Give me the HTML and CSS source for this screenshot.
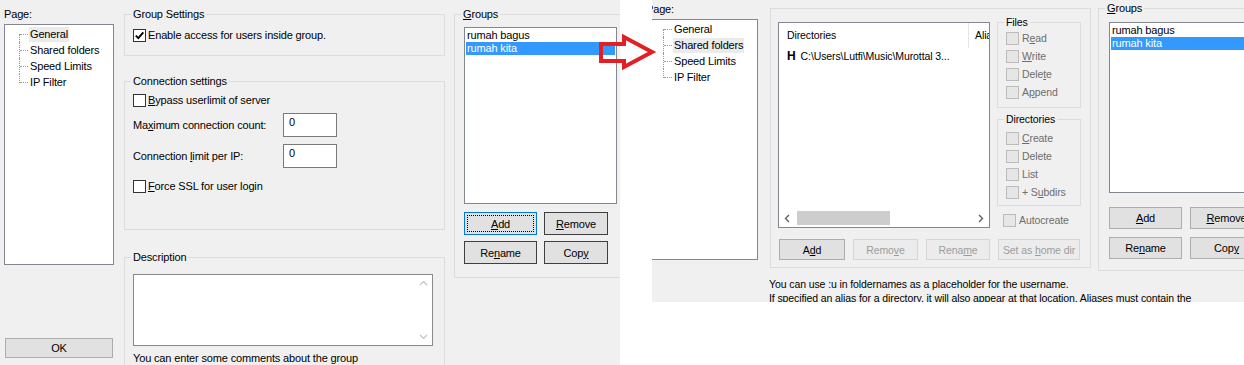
FILE: index.html
```html
<!DOCTYPE html>
<html lang="en">
<head>
  <meta charset="UTF-8">
  <title>Group settings</title>
  <link rel="stylesheet" href="styles.css">
</head>
<body>
  <div class="shot">

    <!-- left: General page -->
    <section class="dlg dlg-left">
      <div class="pages">
        <div class="lbl">Page:</div>
        <ul class="tree">
          <li class="sel"><span>General</span></li>
          <li><span>Shared folders</span></li>
          <li><span>Speed Limits</span></li>
          <li><span>IP Filter</span></li>
        </ul>
        <button class="btn btn-ok">OK</button>
      </div>

      <div class="main">
        <div class="group g-settings">
          <div class="gtitle">Group Settings</div>
          <div class="chk">
            <span class="cb"><svg viewBox="0 0 11 11"><path d="M1.8 5.6 L4.3 8.2 L9.3 2.3" /></svg></span>
            Enable access for users inside group.
          </div>
        </div>

        <div class="group g-conn">
          <div class="gtitle">Connection settings</div>
          <div class="chk r-bypass"><span class="cb"></span><u>B</u>ypass userlimit of server</div>
          <div class="field r-max">
            <span class="flabel">Ma<u>x</u>imum connection count:</span>
            <input class="num" value="0">
          </div>
          <div class="field r-limit">
            <span class="flabel">Connection <u>l</u>imit per IP:</span>
            <input class="num" value="0">
          </div>
          <div class="chk r-ssl"><span class="cb"></span><u>F</u>orce SSL for user login</div>
        </div>

        <div class="group g-desc">
          <div class="gtitle">Description</div>
          <div class="memo">
            <div class="memo-text"></div>
            <div class="memo-bar">
              <svg viewBox="0 0 17 17"><path d="M5 10 L8.5 6.5 L12 10" /></svg>
              <svg viewBox="0 0 17 17"><path d="M5 7 L8.5 10.5 L12 7" /></svg>
            </div>
          </div>
          <div class="note">You can enter some comments about the group</div>
        </div>
      </div>

      <div class="groups">
        <div class="group g-groups">
          <div class="gtitle"><u>G</u>roups</div>
          <ul class="list">
            <li>rumah bagus</li>
            <li class="sel">rumah kita</li>
          </ul>
          <div class="gbtns">
            <button class="btn focus"><u>A</u>dd</button>
            <button class="btn dark"><u>R</u>emove</button>
            <button class="btn dark">Re<u>n</u>ame</button>
            <button class="btn dark">Cop<u>y</u></button>
          </div>
        </div>
      </div>
    </section>

    <!-- right: Shared folders page -->
    <section class="dlg dlg-right">
      <div class="pages">
        <div class="lbl">Page:</div>
        <ul class="tree">
          <li><span>General</span></li>
          <li class="sel"><span>Shared folders</span></li>
          <li><span>Speed Limits</span></li>
          <li><span>IP Filter</span></li>
        </ul>
      </div>

      <div class="share">
        <div class="group g-share">
          <div class="share-top">
            <div class="listview">
              <div class="lv-head">
                <div class="c1">Directories</div>
                <div class="c2">Aliases</div>
              </div>
              <div class="lv-rows">
                <div class="lv-row"><b>H</b>C:\Users\Lutfi\Music\Murottal 3...</div>
              </div>
              <div class="hscroll">
                <svg viewBox="0 0 17 17"><path d="M10 5 L6.5 8.5 L10 12" /></svg>
                <div class="thumb"></div>
                <svg class="right" viewBox="0 0 17 17"><path d="M7 5 L10.5 8.5 L7 12" /></svg>
              </div>
            </div>

            <div class="perm">
              <div class="group g-files">
                <div class="gtitle">Files</div>
                <div class="pchk"><span class="cb"></span>R<u>e</u>ad</div>
                <div class="pchk"><span class="cb"></span><u>W</u>rite</div>
                <div class="pchk"><span class="cb"></span>Dele<u>t</u>e</div>
                <div class="pchk"><span class="cb"></span>A<u>p</u>pend</div>
              </div>
              <div class="group g-dirs">
                <div class="gtitle">Directories</div>
                <div class="pchk"><span class="cb"></span><u>C</u>reate</div>
                <div class="pchk"><span class="cb"></span>Delete</div>
                <div class="pchk"><span class="cb"></span>List</div>
                <div class="pchk"><span class="cb"></span>+ S<u>u</u>bdirs</div>
              </div>
              <div class="pchk autocreate"><span class="cb"></span>Autocreate</div>
            </div>
          </div>

          <div class="share-btns">
            <button class="btn b-add">A<u>d</u>d</button>
            <button class="btn off b-remove">Remo<u>v</u>e</button>
            <button class="btn off b-rename">Rena<u>m</u>e</button>
            <button class="btn off b-home">Set as <u>h</u>ome dir</button>
          </div>
        </div>
        <div class="hint">
          <div>You can use :u in foldernames as a placeholder for the username.</div>
          <div>If specified an alias for a directory, it will also appear at that location. Aliases must contain the</div>
        </div>
      </div>

      <div class="groups">
        <div class="group g-groups">
          <div class="gtitle"><u>G</u>roups</div>
          <ul class="list">
            <li>rumah bagus</li>
            <li class="sel">rumah kita</li>
          </ul>
          <div class="gbtns">
            <button class="btn"><u>A</u>dd</button>
            <button class="btn"><u>R</u>emove</button>
            <button class="btn">Re<u>n</u>ame</button>
            <button class="btn">Cop<u>y</u></button>
          </div>
        </div>
      </div>
    </section>

    <svg class="arrow" viewBox="0 0 62 40">
      <polygon points="5,12 28,12 28,5 56,20 28,35 28,29 5,29" />
    </svg>
  </div>
</body>
</html>
```

FILE: styles.css
```css
* {
  box-sizing: border-box;
}

body {
  margin: 0;
  background: #fff;
  font-family: "Liberation Sans", Arial, sans-serif;
  font-size: 11px;
  color: #000;
}

.shot {
  position: relative;
  display: flex;
  width: 1244px;
  height: 365px;
  overflow: hidden;
}

.dlg {
  display: flex;
  flex-shrink: 0;
  background: #f0f0f0;
  overflow: hidden;
  letter-spacing: -0.15px;
}

.dlg-left {
  width: 620px;
  height: 365px;
  padding-left: 4px;
}

.dlg-right {
  width: 592px;
  height: 302px;
  margin-left: 32px;
}

/* page tree */
.pages {
  width: 110px;
  flex-shrink: 0;
  display: flex;
  flex-direction: column;
}

.dlg-left .pages {
  padding: 7px 0 7px;
}

.dlg-right .pages {
  margin-left: -4px;
  padding-top: 2px;
}

.lbl {
  height: 14px;
  line-height: 14px;
}

.dlg-right .lbl {
  margin-left: -2px;
}

.tree {
  list-style: none;
  margin: 3px 0 0;
  padding: 1px 0 0 14px;
  height: 241px;
  background: #fff;
  border: 1px solid #828790;
}

.tree li {
  position: relative;
  height: 16px;
  line-height: 16px;
  padding-left: 10px;
  white-space: nowrap;
}

.tree li::before {
  content: "";
  position: absolute;
  left: 0;
  top: 0;
  bottom: 0;
  border-left: 1px dotted #9a9a9a;
}

.tree li:first-child::before {
  top: 8px;
}

.tree li:last-child::before {
  bottom: 7px;
}

.tree li::after {
  content: "";
  position: absolute;
  left: 1px;
  top: 8px;
  width: 8px;
  border-top: 1px dotted #9a9a9a;
}

.tree span {
  padding: 1px 1px 2px;
}

.tree .sel span {
  background: #ebebeb;
}

/* buttons */
.btn {
  font: inherit;
  letter-spacing: inherit;
  color: #000;
  height: 23px;
  padding: 0;
  background: #e1e1e1;
  border: 1px solid #adadad;
  border-radius: 0;
}

.btn.dark {
  border-color: #3f3f3f;
}

.btn.focus {
  border-color: #0078d7;
  outline: 1px dotted #000;
  outline-offset: -4px;
}

.btn.off {
  background: #ececec;
  border-color: #d6d6d6;
  color: #9c9c9c;
}

.btn-ok {
  margin: auto 0 0 1px;
  width: 108px;
  height: 20px;
}

/* group boxes */
.group {
  flex-shrink: 0;
  border: 1px solid #dcdcdc;
  padding: 0 8px;
}

.gtitle {
  width: max-content;
  height: 14px;
  line-height: 14px;
  margin: -8px 0 0 -2px;
  padding: 0 2px;
  background: #f0f0f0;
  white-space: nowrap;
}

.main {
  width: 321px;
  margin-left: 10px;
  flex-shrink: 0;
  display: flex;
  flex-direction: column;
}

.g-settings {
  margin-top: 14px;
  height: 42px;
}

.g-settings .chk {
  margin-top: 6px;
}

.g-conn {
  margin-top: 25px;
  height: 149px;
}

.g-desc {
  margin-top: 27px;
  height: 120px;
}

.chk {
  display: flex;
  align-items: center;
  height: 16px;
  white-space: nowrap;
}

.cb {
  display: flex;
  width: 13px;
  height: 13px;
  margin-right: 2px;
  flex-shrink: 0;
  background: #fff;
  border: 1px solid #333;
}

.cb svg {
  width: 11px;
  height: 11px;
  fill: none;
  stroke: #000;
  stroke-width: 1.9;
}

.r-bypass {
  margin-top: 4px;
}

.field {
  display: flex;
  align-items: center;
  height: 24px;
}

.r-max {
  margin-top: 5px;
}

.r-limit {
  margin-top: 7px;
}

.r-ssl {
  margin-top: 10px;
}

.flabel {
  width: 150px;
}

.num {
  width: 54px;
  height: 24px;
  padding: 0 5px 6px;
  font: inherit;
  color: #000;
  background: #fff;
  border: 1px solid #7a7a7a;
  outline: none;
}

.memo {
  display: flex;
  width: 300px;
  height: 72px;
  margin-top: 10px;
  background: #fff;
  border: 1px solid #8a8a8a;
}

.memo-text {
  flex: 1;
}

.memo-bar {
  width: 17px;
  display: flex;
  flex-direction: column;
  justify-content: space-between;
}

.memo-bar svg {
  width: 17px;
  height: 17px;
  fill: none;
  stroke: #c2c2c2;
  stroke-width: 1.2;
}

.note {
  margin-top: 5px;
  line-height: 14px;
  white-space: nowrap;
}

/* group list */
.groups {
  flex-shrink: 0;
}

.dlg-left .groups {
  margin-left: 9px;
}

.dlg-left .g-groups {
  margin-top: 14px;
  width: 175px;
  height: 264px;
}

.list {
  list-style: none;
  margin: 6px 0 0 1px;
  padding: 1px 1px 0;
  width: 153px;
  height: 177px;
  background: #fff;
  border: 1px solid #828790;
}

.list li {
  height: 13px;
  line-height: 13px;
  padding-left: 1px;
  white-space: nowrap;
}

.list .sel {
  background: #3399ff;
  color: #fff;
}

.gbtns {
  display: grid;
  grid-template-columns: 73px 64px;
  column-gap: 7px;
  row-gap: 6px;
  margin: 8px 0 0 1px;
}

.dlg-right .groups {
  margin-left: 7px;
}

.dlg-right .g-groups {
  margin-top: 8px;
  width: 170px;
  height: 263px;
}

.dlg-right .list {
  margin: 7px 0 0 2px;
  height: 171px;
  width: 160px;
}

.dlg-right .gbtns {
  grid-template-columns: 73px 73px;
  column-gap: 8px;
  row-gap: 8px;
  margin: 14px 0 0 2px;
}

.dlg-right .gbtns .btn {
  height: 22px;
}

/* shared folders page */
.share {
  width: 321px;
  margin-left: 12px;
  flex-shrink: 0;
  font-size: 10.5px;
  letter-spacing: -0.1px;
}

.g-share {
  margin-top: 8px;
  height: 260px;
  padding: 13px 7px 0;
}

.share-top {
  display: flex;
  gap: 7px;
}

.listview {
  display: flex;
  flex-direction: column;
  width: 212px;
  height: 206px;
  background: #fff;
  border: 1px solid #828790;
}

.lv-head {
  display: flex;
  height: 25px;
  line-height: 24px;
  white-space: nowrap;
}

.lv-head .c1 {
  width: 190px;
  padding-left: 8px;
  border-right: 1px solid #e5e5e5;
}

.lv-head .c2 {
  flex: 1;
  padding-left: 6px;
  overflow: hidden;
}

.lv-rows {
  flex: 1;
}

.lv-row {
  height: 17px;
  line-height: 17px;
  padding-left: 8px;
  white-space: nowrap;
}

.lv-row b {
  font-size: 12px;
  margin-right: 5px;
}

.hscroll {
  display: flex;
  align-items: center;
  height: 18px;
}

.hscroll svg {
  width: 17px;
  height: 17px;
  fill: none;
  stroke: #606060;
  stroke-width: 1.4;
}

.hscroll .right {
  margin-left: auto;
}

.thumb {
  width: 93px;
  height: 14px;
  margin-left: 1px;
  background: #cdcdcd;
}

.perm {
  width: 84px;
  display: flex;
  flex-direction: column;
}

.g-files {
  height: 86px;
}

.g-dirs {
  margin-top: 11px;
  height: 87px;
}

.g-dirs .pchk:nth-child(2) {
  margin-top: 3px;
}

.pchk {
  display: flex;
  align-items: center;
  height: 18px;
  color: #6d6d6d;
  white-space: nowrap;
}

.pchk .cb {
  margin-right: 3px;
  background: #e6e6e6;
  border-color: #bcbcbc;
}

.autocreate {
  margin-top: 6px;
  padding-left: 6px;
  height: 16px;
}

.share-btns {
  display: flex;
  gap: 8px;
  margin: 11px 0 0 1px;
}

.share-btns .btn {
  height: 21px;
}

.b-add {
  width: 66px;
}

.b-remove {
  width: 65px;
}

.b-rename {
  width: 64px;
}

.b-home {
  width: 82px;
}

.hint {
  margin: 9px 0 0 -1px;
  line-height: 14px;
  white-space: nowrap;
}

/* red arrow drawn over the screenshots */
.arrow {
  position: absolute;
  left: 596px;
  top: 32px;
  width: 62px;
  height: 40px;
  fill: none;
  stroke: #e31e24;
  stroke-width: 4;
}
```
